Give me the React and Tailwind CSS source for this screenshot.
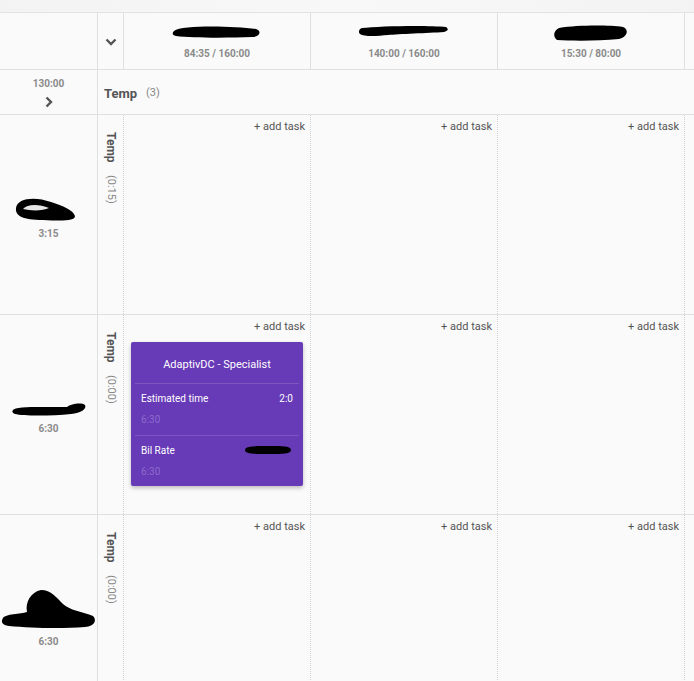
import React from "react";

const columns = [
  { time: "84:35 / 160:00", blob: "M2 6 C10 0 60 1 84 4 C90 6 88 12 80 12 C55 13 20 13 4 11 C0 10 0 8 2 6 Z", w: 90 },
  { time: "140:00 / 160:00", blob: "M4 3 C20 1 70 0 88 2 C91 4 90 6 86 7 C70 8 40 9 30 10 C20 11 6 12 2 9 C0 7 1 4 4 3 Z", w: 92 },
  { time: "15:30 / 80:00", blob: "M6 3 C25 0 55 0 70 2 C76 4 75 12 66 14 C45 16 20 16 4 15 C0 12 0 6 6 3 Z", w: 76 },
];

const rows = [
  { total: "3:15", temp: "(0:15)", blob: "row1", card: false },
  { total: "6:30", temp: "(0:00)", blob: "row2", card: true },
  { total: "6:30", temp: "(0:00)", blob: "row3", card: false },
];

function Blob({ kind }) {
  if (kind === "row1") {
    return (
      <svg width="64" height="26" viewBox="0 0 64 26" className="-ml-[8px]">
        <path d="M3 12 C4 2 22 0 38 6 C50 10 60 14 62 20 C62 25 50 25 30 24 C10 24 2 20 3 12 Z" fill="#000" />
        <path d="M10 13 C14 8 26 8 36 12 C30 15 18 15 10 13 Z" fill="#fff" opacity="0.9" />
      </svg>
    );
  }
  if (kind === "row2") {
    return (
      <svg width="76" height="16" viewBox="0 0 76 16">
        <path d="M2 9 C4 5 30 6 56 6 C60 3 70 1 74 4 C76 8 70 12 60 13 C40 15 12 15 4 13 C1 12 1 10 2 9 Z" fill="#000" />
      </svg>
    );
  }
  return (
    <svg width="96" height="42" viewBox="0 0 96 42">
      <path d="M2 30 C4 26 20 26 26 24 C24 14 30 4 40 2 C50 2 56 10 62 16 C68 22 82 24 92 28 C96 32 94 38 84 39 C60 41 30 40 8 38 C0 37 0 33 2 30 Z" fill="#000" />
    </svg>
  );
}

function ChevronDown() {
  return (
    <svg width="12" height="8" viewBox="0 0 12 8">
      <path d="M1.5 1.5 L6 6 L10.5 1.5" fill="none" stroke="#555" strokeWidth="2.4" />
    </svg>
  );
}

function ChevronRight() {
  return (
    <svg width="8" height="12" viewBox="0 0 8 12">
      <path d="M1.5 1.5 L6 6 L1.5 10.5" fill="none" stroke="#555" strokeWidth="2.4" />
    </svg>
  );
}

function TaskCard() {
  return (
    <div className="mx-[7px] mt-[6px] w-[172px] rounded-[2px] bg-[#673ab7] text-white shadow-[0_2px_4px_rgba(0,0,0,0.25)]">
      <div className="flex h-[41px] items-center justify-center pt-[6px] text-[11px]">AdaptivDC - Specialist</div>
      <div className="mx-[4px] h-px bg-[#7d56c2]" />
      <div className="h-[51px] px-[10px] pt-[7px] text-[10px]">
        <div className="flex justify-between">
          <span>Estimated time</span>
          <span>2:0</span>
        </div>
        <div className="mt-[6px] text-[#8e6bcb]">6:30</div>
      </div>
      <div className="mx-[4px] h-px bg-[#7d56c2]" />
      <div className="h-[50px] px-[10px] pt-[7px] text-[10px]">
        <div className="flex items-center justify-between">
          <span>Bil Rate</span>
          <svg width="50" height="10" viewBox="0 0 50 10">
            <path d="M2 5 C2 1 10 1 26 1 C40 1 48 1 48 5 C48 9 40 9 26 9 C10 9 2 9 2 5 Z" fill="#000" />
          </svg>
        </div>
        <div className="mt-[6px] text-[#8e6bcb]">6:30</div>
      </div>
    </div>
  );
}

export default function App() {
  return (
    <div className="h-[681px] w-[694px] overflow-hidden bg-[#fafafa] font-['Roboto',_'Liberation_Sans',_sans-serif] text-[#555]">
      <div className="h-[13px] border-b border-[#e2e2e2] bg-gradient-to-r from-[#f3f3f3] via-[#f8f8f8] to-[#f3f3f3]" />
      <div className="flex h-[57px] border-b border-[#e0e0e0]">
        <div className="w-[98px] shrink-0 border-r border-[#e0e0e0]" />
        <div className="flex w-[26px] shrink-0 items-center justify-center border-r border-[#e0e0e0] pt-[2px]">
          <ChevronDown />
        </div>
        {columns.map((c, i) => (
          <div key={i} className="flex w-[187px] shrink-0 flex-col items-center border-r border-[#e0e0e0] pt-[12px]">
            <svg width={c.w} height="17" viewBox={`0 0 ${c.w} 17`}>
              <path d={c.blob} fill="#000" />
            </svg>
            <div className="mt-[4px] text-[10px] font-bold text-[#8a8a8a]">{c.time}</div>
          </div>
        ))}
      </div>
      <div className="flex h-[45px] border-b border-[#e0e0e0]">
        <div className="flex w-[98px] shrink-0 flex-col items-center border-r border-[#e0e0e0] pt-[6px]">
          <div className="text-[10px] font-bold text-[#8a8a8a]">130:00</div>
          <div className="mt-[5px]">
            <ChevronRight />
          </div>
        </div>
        <div className="flex items-center pl-[6px] pt-[3px]">
          <span className="text-[13px] font-bold text-[#555]">Temp</span>
          <span className="ml-[9px] text-[11px] text-[#888]">(3)</span>
        </div>
      </div>
      {rows.map((r, i) => (
        <div key={i} className="flex h-[200px] border-b border-[#e0e0e0]">
          <div className="flex w-[98px] shrink-0 flex-col items-center justify-center border-r border-[#e0e0e0] pt-[8px]">
            <Blob kind={r.blob} />
            <div className="mt-[4px] text-[10px] font-bold text-[#8a8a8a]">{r.total}</div>
          </div>
          <div className="flex w-[26px] shrink-0 justify-center border-r border-dotted border-[#d0d0d0] pt-[17px]">
            <div className="flex items-center [writing-mode:vertical-rl]">
              <span className="text-[12px] font-bold text-[#555]">Temp</span>
              <span className="mt-[12px] text-[11px] text-[#888]">{r.temp}</span>
            </div>
          </div>
          {columns.map((c, j) => (
            <div key={j} className="w-[187px] shrink-0 border-r border-dotted border-[#d0d0d0] pt-[4px]">
              <div className="pr-[5px] text-right text-[11px] text-[#555]">+ add task</div>
              {r.card && j === 0 && <TaskCard />}
            </div>
          ))}
        </div>
      ))}
    </div>
  );
}
